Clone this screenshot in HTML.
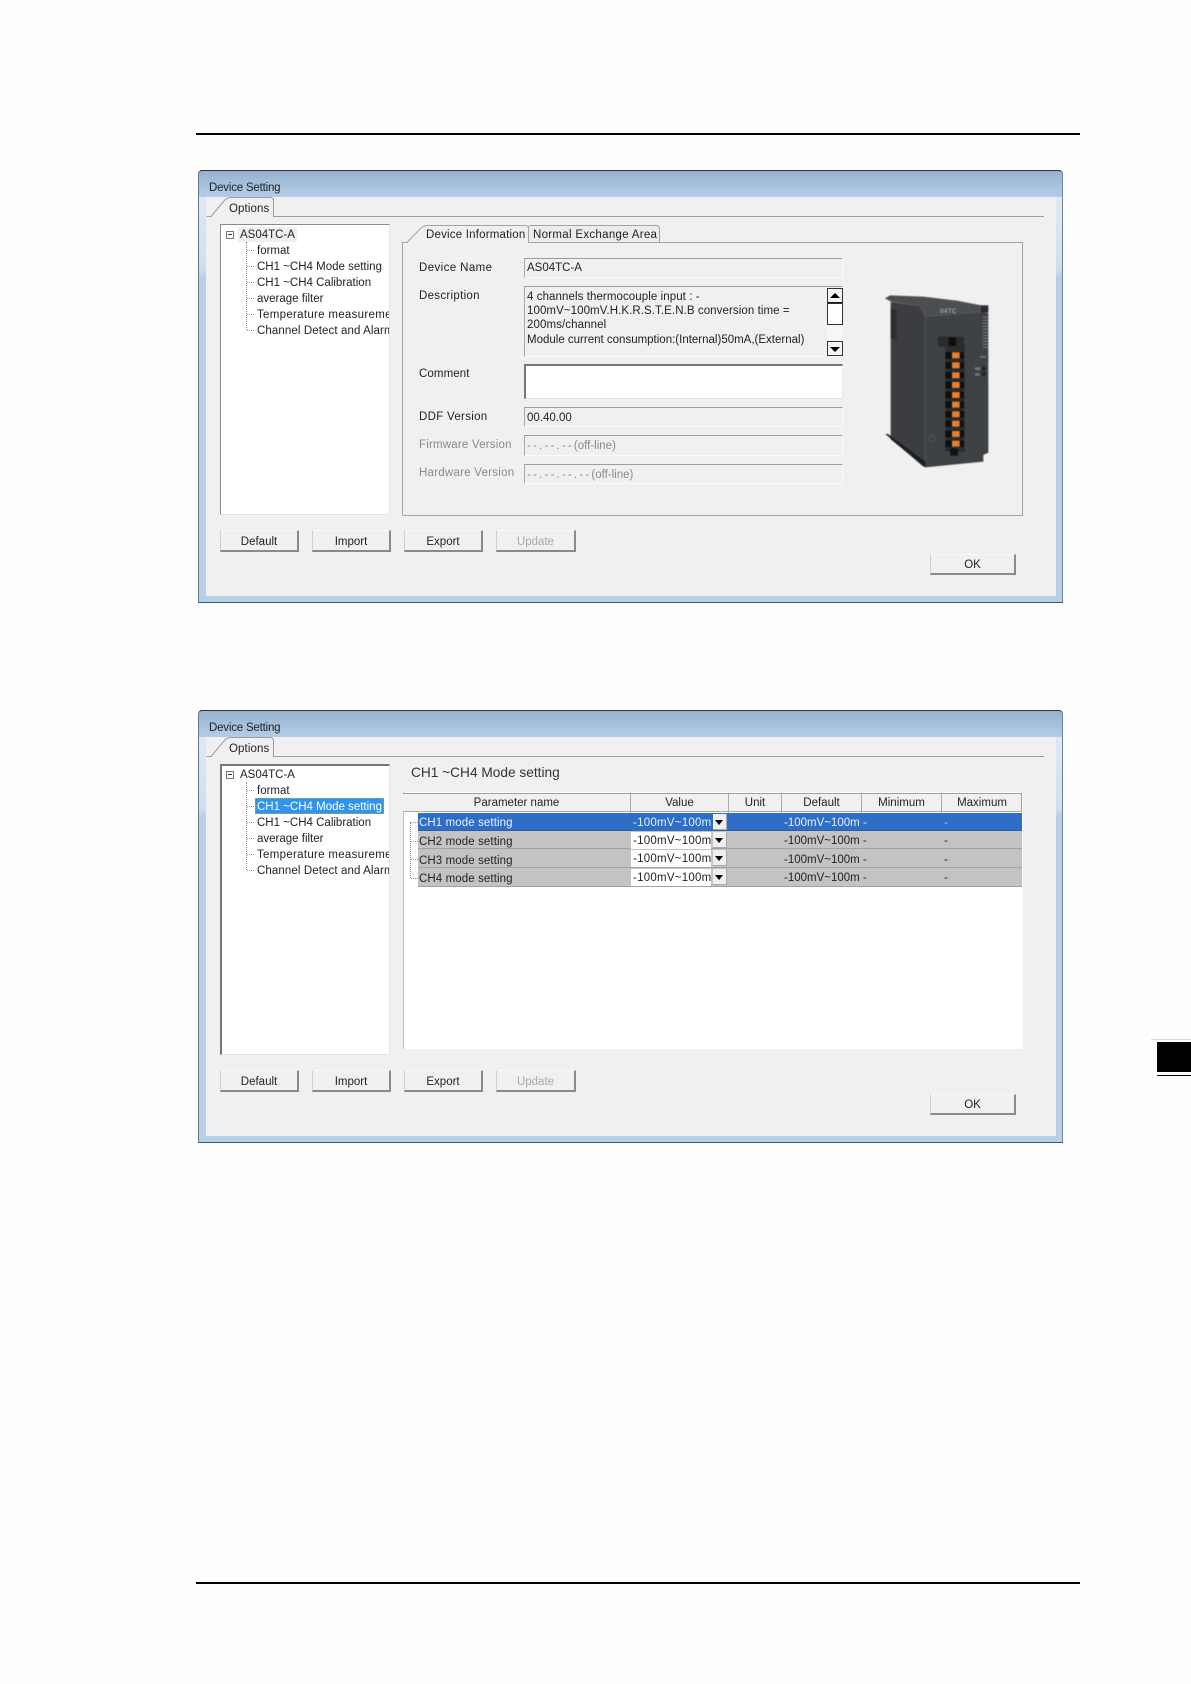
<!DOCTYPE html>
<html lang="en"><head><meta charset="utf-8"><title>Device Setting</title>
<style>
html,body{margin:0;padding:0;background:#fefefe}
body{position:relative;width:1191px;height:1684px;overflow:hidden;font-family:"Liberation Sans",Arial,sans-serif;font-size:11.5px;color:#222}
div,span,svg{position:absolute;box-sizing:border-box}
.d{left:0;width:1191px;height:620px;filter:blur(.3px)}
.win{left:198px;top:170px;width:865px;height:433px;border-top:1px solid #333;border-left:1px solid #6a7680;border-right:1px solid #5f8aa6;border-bottom:1px solid #1f6478;border-radius:4px 4px 0 0;background:linear-gradient(#97b3ce 0,#b5cde9 27px,#b8cfe7 28px)}
.lt{left:199px;top:197px;width:7px;height:80px;background:linear-gradient(#dfe9f3,#cfdef0 90%,#b8cfe7)}
.rt{left:1056px;top:197px;width:6px;height:80px;background:linear-gradient(#dfe9f3,#cfdef0 90%,#b8cfe7)}
.cl{left:206px;top:197px;width:850px;height:399px;background:#f0f0f0}
.t{white-space:nowrap;line-height:16px;height:16px;margin-top:1px}
.tree{left:220px;top:224px;width:170px;height:291px;background:#fff;border-top:1px solid #8a8a8a;border-left:1px solid #8a8a8a;border-right:1px solid #e4e4e4;border-bottom:1px solid #e4e4e4;overflow:hidden}
.f{left:524px;width:319px;background:#f0f0f0;border-top:1px solid #9c9c9c;border-left:1px solid #a8a8a8;border-right:1px solid #fafafa;border-bottom:1px solid #fafafa}
.b{width:79px;height:22px;background:#f0f0f0;border-top:1px solid #f8f8f8;border-left:1px solid #d0d0d0;border-right:2px solid #8a8a8a;border-bottom:2px solid #8a8a8a;text-align:center;line-height:22px;font-size:11.5px}
.g{color:#8a8a8a}
.row{left:418px;width:604px;height:18px;background:#c3c3c3;border-bottom:1px solid #a2a2a2}
.v{left:631px;width:80px;background:#fff;height:17px;overflow:hidden;white-space:nowrap;padding-left:2px;line-height:18px;letter-spacing:.25px}
.dd{left:713px;width:14px;height:16px;background:#efefef;border-right:1px solid #aaa;border-bottom:1px solid #aaa}
.dd:after{content:"";position:absolute;left:2px;top:6px;border-left:4.500px solid transparent;border-right:4.500px solid transparent;border-top:5px solid #000}
.c{white-space:nowrap;overflow:hidden;line-height:18px;height:17px}
.hd{top:793px;height:19px;line-height:19px;text-align:center;border-right:1px solid #aaa}
</style></head><body>

<div style="left:196px;top:133px;width:884px;height:2px;background:#000"></div>
<div style="left:196px;top:1582px;width:884px;height:2px;background:#000"></div>
<div style="left:1151px;top:1039px;width:40px;height:1px;background:#ddd"></div>
<div style="left:1157px;top:1042px;width:34px;height:30px;background:#000"></div>
<div style="left:1157px;top:1075px;width:34px;height:1px;background:#000"></div>

<!-- Dialog 1 -->
<div class="d" style="top:0">
<div class="win"></div><div class="lt"></div><div class="rt"></div><div class="cl"></div>
<div class="t" style="left:209px;top:179px;letter-spacing:-.2px">Device Setting</div>
<svg style="left:0;top:0" width="1191" height="620">
<path d="M206.500 216.500H211L224 201Q227 197.500 231 197.500H270Q273.500 197.500 273.500 201V216.500H1044" fill="#f0f0f0" stroke="#9c9c9c"/>
<path d="M402.500 515V242.500H407L421 228Q424 225.500 428 225.500H525Q528.500 225.500 528.500 229V242.500" fill="#f0f0f0" stroke="#a4a4a4"/>
<path d="M528.500 242.500V228Q528.500 225.500 531 225.500H656Q659.500 225.500 659.500 229V242.500Z" fill="#ececec" stroke="#a4a4a4"/>
<path d="M528 242.500H1022.500V515.500H402.500" fill="none" stroke="#a4a4a4"/>
</svg>
<div class="t" style="left:229px;top:200px;letter-spacing:.1px">Options</div>

<div class="tree"></div>
<div style="left:238px;top:227px;width:59px;height:15px;background:#f0f0f0"></div>
<div style="left:226px;top:231px;width:8px;height:8px;border:1px solid #777"></div>
<div style="left:228px;top:234px;width:4px;height:1px;background:#333"></div>
<div style="left:246px;top:242px;height:88px;width:1px;border-left:1px dotted #888"></div>
<div style="left:247px;top:250px;width:7px;border-top:1px dotted #999;height:1px"></div>
<div style="left:247px;top:266px;width:7px;border-top:1px dotted #999;height:1px"></div>
<div style="left:247px;top:282px;width:7px;border-top:1px dotted #999;height:1px"></div>
<div style="left:247px;top:298px;width:7px;border-top:1px dotted #999;height:1px"></div>
<div style="left:247px;top:314px;width:7px;border-top:1px dotted #999;height:1px"></div>
<div style="left:247px;top:330px;width:7px;border-top:1px dotted #999;height:1px"></div>
<div class="t" style="left:240px;top:226px">AS04TC-A</div>
<div style="left:221px;top:225px;width:168px;height:112px;overflow:hidden">
<div class="t" style="left:36px;top:17px">format</div>
<div class="t" style="left:36px;top:33px">CH1 ~CH4 Mode setting</div>
<div class="t" style="left:36px;top:49px">CH1 ~CH4 Calibration</div>
<div class="t" style="left:36px;top:65px">average filter</div>
<div class="t" style="left:36px;top:81px;letter-spacing:.3px">Temperature measurement</div>
<div class="t" style="left:36px;top:97px;letter-spacing:.1px">Channel Detect and Alarm</div>
</div>

<div class="t" style="left:426px;top:226px;letter-spacing:.2px">Device Information</div>
<div class="t" style="left:533px;top:226px;letter-spacing:.3px">Normal Exchange Area</div>

<div class="t" style="left:419px;top:259px;letter-spacing:.4px">Device Name</div>
<div class="t" style="left:419px;top:287px;letter-spacing:.3px">Description</div>
<div class="t" style="left:419px;top:365px;letter-spacing:.1px">Comment</div>
<div class="t" style="left:419px;top:408px;letter-spacing:.3px">DDF Version</div>
<div class="t g" style="left:419px;top:436px;letter-spacing:.2px">Firmware Version</div>
<div class="t g" style="left:419px;top:464px;letter-spacing:.25px">Hardware Version</div>

<div class="f" style="top:258px;height:20px"></div>
<div class="t" style="left:527px;top:259px">AS04TC-A</div>
<div class="f" style="top:286px;height:71px"></div>
<div class="t" style="left:527px;top:288px;letter-spacing:.08px">4 channels thermocouple input : -</div>
<div class="t" style="left:527px;top:302px;letter-spacing:.08px">100mV~100mV.H.K.R.S.T.E.N.B conversion time =</div>
<div class="t" style="left:527px;top:316px;letter-spacing:.1px">200ms/channel</div>
<div class="t" style="left:527px;top:331px">Module current consumption:(Internal)50mA,(External)</div>
<div style="left:827px;top:288px;width:16px;height:68px;background:#f6f6f6"></div>
<div style="left:827px;top:288px;width:16px;height:16px;border:1px solid #333;border-bottom:2px solid #111;background:#f4f4f4"></div>
<div style="left:830px;top:293px;width:0;height:0;border-left:5px solid transparent;border-right:5px solid transparent;border-bottom:5px solid #000"></div>
<div style="left:827px;top:303px;width:16px;height:22px;border:1px solid #333;background:#fff"></div>
<div style="left:827px;top:341px;width:16px;height:15px;border:1px solid #333;background:#f4f4f4"></div>
<div style="left:830px;top:347px;width:0;height:0;border-left:5px solid transparent;border-right:5px solid transparent;border-top:5px solid #000"></div>

<div style="left:524px;top:364px;width:319px;height:35px;background:#fff;border-top:2px solid #777;border-left:2px solid #777;border-right:1px solid #e8e8e8;border-bottom:1px solid #e0e0e0"></div>
<div class="f" style="top:407px;height:20px"></div>
<div class="t" style="left:527px;top:409px">00.40.00</div>
<div class="f" style="top:435px;height:21px"></div>
<div class="t g" style="left:527px;top:437px;word-spacing:-1px">- - . - - . - - (off-line)</div>
<div class="f" style="top:464px;height:20px"></div>
<div class="t g" style="left:527px;top:466px;word-spacing:-1px">- - . - - . - - . - - (off-line)</div>

<svg style="left:860px;top:280px;filter:blur(.4px)" width="150" height="200" viewBox="0 0 450 600">
<polygon points="75,55 90,46 190,50 290,62 365,76 368,96 196,110 178,78 95,66" fill="#4c4e51"/>
<polygon points="92,66 178,78 196,110 196,562 92,478" fill="#3b3d40"/>
<polygon points="92,85 110,90 110,180 92,175" fill="#2d2e30"/>
<polygon points="196,110 368,96 385,100 385,518 370,525 370,545 196,562" fill="#3f4245"/>
<polygon points="76,462 84,462 196,545 196,562 188,558" fill="#1c1d1e"/>
<rect x="363" y="76" width="22" height="22" fill="#2a2b2d"/>
<g stroke="#a0a2a5" stroke-width="2"><path d="M368 112H385M368 121H385M368 130H385M368 139H385M368 148H385M368 157H385M368 166H385M368 175H385M368 184H385M368 193H385M368 202H385"/></g>
<text x="240" y="99" font-size="19" fill="#c4c6c8" font-family="Liberation Sans, sans-serif" letter-spacing="1">04TC</text>
<rect x="234" y="170" width="78" height="30" fill="#2a2b2d"/>
<rect x="256" y="190" width="58" height="325" fill="#2b2c2e"/>
<rect x="266" y="172" width="22" height="26" fill="#0d0d0d"/>
<g fill="#0f0f0f"><rect x="256" y="216" width="56" height="20" rx="5"/><rect x="256" y="246" width="56" height="20" rx="5"/><rect x="256" y="276" width="56" height="20" rx="5"/><rect x="256" y="305" width="56" height="20" rx="5"/><rect x="256" y="335" width="56" height="20" rx="5"/><rect x="256" y="364" width="56" height="20" rx="5"/><rect x="256" y="393" width="56" height="20" rx="5"/><rect x="256" y="421" width="56" height="20" rx="5"/><rect x="256" y="452" width="56" height="20" rx="5"/><rect x="256" y="481" width="56" height="20" rx="5"/></g>
<g fill="#ea7f2e"><rect x="276" y="217" width="23" height="18"/><rect x="276" y="247" width="23" height="18"/><rect x="276" y="277" width="23" height="18"/><rect x="276" y="306" width="23" height="18"/><rect x="276" y="336" width="23" height="18"/><rect x="276" y="365" width="23" height="18"/><rect x="276" y="394" width="23" height="18"/><rect x="276" y="422" width="23" height="18"/><rect x="276" y="453" width="23" height="18"/><rect x="276" y="482" width="23" height="18"/></g>
<rect x="270" y="505" width="24" height="22" fill="#121212"/>
<g fill="#77797c"><rect x="345" y="262" width="16" height="8"/><rect x="345" y="280" width="14" height="7"/><rect x="360" y="228" width="18" height="5"/></g>
<g fill="#222"><rect x="365" y="260" width="12" height="12"/><rect x="365" y="276" width="12" height="12"/></g>
<circle cx="217" cy="475" r="9" fill="none" stroke="#66686b" stroke-width="1.500"/>
</svg>

<div class="b" style="left:220px;top:530px">Default</div>
<div class="b" style="left:312px;top:530px">Import</div>
<div class="b" style="left:404px;top:530px">Export</div>
<div class="b" style="left:496px;top:530px;width:80px;color:#a8a8a8">Update</div>
<div class="b" style="left:930px;top:554px;width:86px;height:21px;line-height:20px">OK</div>
</div>

<!-- Dialog 2 -->
<div class="d" style="top:540px">
<div class="win"></div><div class="lt"></div><div class="rt"></div><div class="cl"></div>
<div class="t" style="left:209px;top:179px;letter-spacing:-.2px">Device Setting</div>
<svg style="left:0;top:0" width="1191" height="620">
<path d="M206.500 216.500H211L224 201Q227 197.500 231 197.500H270Q273.500 197.500 273.500 201V216.500H1044" fill="#f0f0f0" stroke="#9c9c9c"/>
</svg>
<div class="t" style="left:229px;top:200px;letter-spacing:.1px">Options</div>

<div class="tree" style="border-top:2px solid #777;border-left:2px solid #777"></div>
<div style="left:226px;top:231px;width:8px;height:8px;border:1px solid #777"></div>
<div style="left:228px;top:234px;width:4px;height:1px;background:#333"></div>
<div style="left:246px;top:242px;height:88px;width:1px;border-left:1px dotted #888"></div>
<div style="left:247px;top:250px;width:7px;border-top:1px dotted #999;height:1px"></div>
<div style="left:247px;top:266px;width:7px;border-top:1px dotted #999;height:1px"></div>
<div style="left:247px;top:282px;width:7px;border-top:1px dotted #999;height:1px"></div>
<div style="left:247px;top:298px;width:7px;border-top:1px dotted #999;height:1px"></div>
<div style="left:247px;top:314px;width:7px;border-top:1px dotted #999;height:1px"></div>
<div style="left:247px;top:330px;width:7px;border-top:1px dotted #999;height:1px"></div>
<div style="left:255px;top:258px;width:129px;height:16px;background:#2f93f0;border:1px dotted #b9a040"></div>
<div class="t" style="left:240px;top:226px">AS04TC-A</div>
<div style="left:221px;top:225px;width:168px;height:112px;overflow:hidden">
<div class="t" style="left:36px;top:17px">format</div>
<div class="t" style="left:36px;top:33px;color:#fff">CH1 ~CH4 Mode setting</div>
<div class="t" style="left:36px;top:49px">CH1 ~CH4 Calibration</div>
<div class="t" style="left:36px;top:65px">average filter</div>
<div class="t" style="left:36px;top:81px;letter-spacing:.3px">Temperature measurement</div>
<div class="t" style="left:36px;top:97px;letter-spacing:.1px">Channel Detect and Alarm</div>
</div>

<div class="t" style="left:411px;top:224px;font-size:13.700px;line-height:18px;height:18px;margin-top:0;color:#333">CH1 ~CH4 Mode setting</div>

<div style="left:403px;top:252px;width:620px;height:257px;background:#fff;border-left:1px solid #c0c0c0"></div>
<div style="left:403px;top:253px;width:619px;height:19px;background:#f0f0f0;border-top:1px solid #a0a0a0;border-bottom:1px solid #aaa;border-right:1px solid #a0a0a0"></div>
<div class="t hd" style="left:403px;top:253px;width:228px">Parameter name</div>
<div class="t hd" style="left:631px;top:253px;width:98px">Value</div>
<div class="t hd" style="left:729px;top:253px;width:53px">Unit</div>
<div class="t hd" style="left:782px;top:253px;width:80px">Default</div>
<div class="t hd" style="left:862px;top:253px;width:80px">Minimum</div>
<div class="t hd" style="left:942px;top:253px;width:80px;border-right:0">Maximum</div>

<div style="left:410px;top:282px;height:56px;width:1px;border-left:1px dotted #888"></div>
<div style="left:411px;top:282px;width:7px;height:1px;border-top:1px dotted #999"></div>
<div style="left:411px;top:301px;width:7px;height:1px;border-top:1px dotted #999"></div>
<div style="left:411px;top:319px;width:7px;height:1px;border-top:1px dotted #999"></div>
<div style="left:411px;top:338px;width:7px;height:1px;border-top:1px dotted #999"></div>

<div class="row" style="top:273px;background:#2e6ec7;border-bottom:1px solid #2a5fa8"></div>
<div class="row" style="top:291px;height:18px"></div>
<div class="row" style="top:309px;height:19px"></div>
<div class="row" style="top:328px;height:19px"></div>

<div class="t" style="left:419px;top:274px;color:#eaf2ff;letter-spacing:.1px">CH1 mode setting</div>
<div class="t" style="left:419px;top:293px;letter-spacing:.1px">CH2 mode setting</div>
<div class="t" style="left:419px;top:312px;letter-spacing:.1px">CH3 mode setting</div>
<div class="t" style="left:419px;top:330px;letter-spacing:.1px">CH4 mode setting</div>

<div class="v" style="top:274px;background:#2e6ec7;color:#e6efff">-100mV~100mV</div>
<div class="v" style="top:292px">-100mV~100mV</div>
<div class="v" style="top:310px">-100mV~100mV</div>
<div class="v" style="top:329px">-100mV~100mV</div>
<div class="dd" style="top:274px"></div>
<div class="dd" style="top:292px"></div>
<div class="dd" style="top:310px"></div>
<div class="dd" style="top:329px"></div>

<div class="c" style="left:784px;top:274px;width:76px;color:#e6efff">-100mV~100mV</div>
<div class="c" style="left:784px;top:292px;width:76px">-100mV~100mV</div>
<div class="c" style="left:784px;top:311px;width:76px">-100mV~100mV</div>
<div class="c" style="left:784px;top:329px;width:76px">-100mV~100mV</div>
<div class="c" style="left:863px;top:274px;color:#e6efff">-</div><div class="c" style="left:944px;top:274px;color:#a8c4ee">-</div>
<div class="c" style="left:863px;top:292px">-</div><div class="c" style="left:944px;top:292px">-</div>
<div class="c" style="left:863px;top:311px">-</div><div class="c" style="left:944px;top:311px">-</div>
<div class="c" style="left:863px;top:329px">-</div><div class="c" style="left:944px;top:329px">-</div>

<div class="b" style="left:220px;top:530px">Default</div>
<div class="b" style="left:312px;top:530px">Import</div>
<div class="b" style="left:404px;top:530px">Export</div>
<div class="b" style="left:496px;top:530px;width:80px;color:#a8a8a8">Update</div>
<div class="b" style="left:930px;top:554px;width:86px;height:21px;line-height:20px">OK</div>
</div>
</body></html>
